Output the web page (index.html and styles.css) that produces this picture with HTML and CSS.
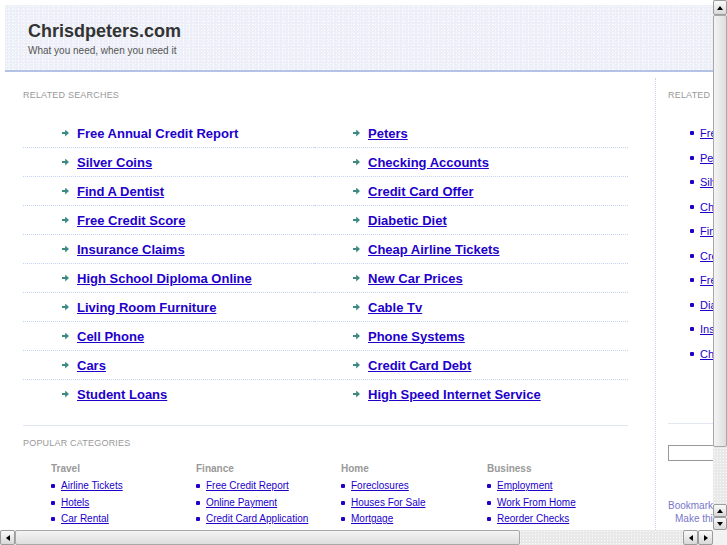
FILE: index.html
```html
<!DOCTYPE html>
<html lang="en">
  <head>
    <meta charset="UTF-8" />
    <title>Chrisdpeters.com</title>
    <link rel="stylesheet" href="styles.css">
  </head>
  <body>
    <div class="page">
      <div class="header">
        <h1>Chrisdpeters.com</h1>
        <p>What you need, when you need it</p>
      </div>

      <div class="content">
        <div class="main">
          <h2 class="label">Related Searches</h2>

          <div class="searches">
            <div class="item"><span class="arrow"></span><a href="#" class="plain">Free Annual Credit Report</a></div>
            <div class="item"><span class="arrow"></span><a href="#">Peters</a></div>
            <div class="item"><span class="arrow"></span><a href="#">Silver Coins</a></div>
            <div class="item"><span class="arrow"></span><a href="#">Checking Accounts</a></div>
            <div class="item"><span class="arrow"></span><a href="#">Find A Dentist</a></div>
            <div class="item"><span class="arrow"></span><a href="#">Credit Card Offer</a></div>
            <div class="item"><span class="arrow"></span><a href="#">Free Credit Score</a></div>
            <div class="item"><span class="arrow"></span><a href="#">Diabetic Diet</a></div>
            <div class="item"><span class="arrow"></span><a href="#">Insurance Claims</a></div>
            <div class="item"><span class="arrow"></span><a href="#">Cheap Airline Tickets</a></div>
            <div class="item"><span class="arrow"></span><a href="#">High School Diploma Online</a></div>
            <div class="item"><span class="arrow"></span><a href="#">New Car Prices</a></div>
            <div class="item"><span class="arrow"></span><a href="#">Living Room Furniture</a></div>
            <div class="item"><span class="arrow"></span><a href="#">Cable Tv</a></div>
            <div class="item"><span class="arrow"></span><a href="#">Cell Phone</a></div>
            <div class="item"><span class="arrow"></span><a href="#">Phone Systems</a></div>
            <div class="item"><span class="arrow"></span><a href="#">Cars</a></div>
            <div class="item"><span class="arrow"></span><a href="#">Credit Card Debt</a></div>
            <div class="item last"><span class="arrow"></span><a href="#">Student Loans</a></div>
            <div class="item last"><span class="arrow"></span><a href="#">High Speed Internet Service</a></div>
          </div>

          <div class="popular">
            <h2 class="label">Popular Categories</h2>
            <div class="cats">
              <div class="cat">
                <h3>Travel</h3>
                <ul>
                  <li><a href="#">Airline Tickets</a></li>
                  <li><a href="#">Hotels</a></li>
                  <li><a href="#">Car Rental</a></li>
                </ul>
              </div>
              <div class="cat">
                <h3>Finance</h3>
                <ul>
                  <li><a href="#">Free Credit Report</a></li>
                  <li><a href="#">Online Payment</a></li>
                  <li><a href="#">Credit Card Application</a></li>
                </ul>
              </div>
              <div class="cat">
                <h3>Home</h3>
                <ul>
                  <li><a href="#">Foreclosures</a></li>
                  <li><a href="#">Houses For Sale</a></li>
                  <li><a href="#">Mortgage</a></li>
                </ul>
              </div>
              <div class="cat">
                <h3>Business</h3>
                <ul>
                  <li><a href="#">Employment</a></li>
                  <li><a href="#">Work From Home</a></li>
                  <li><a href="#">Reorder Checks</a></li>
                </ul>
              </div>
            </div>
          </div>
        </div>

        <div class="side">
          <h2 class="label">Related Searches</h2>
          <ul class="side-links">
            <li><a href="#">Free Annual Credit Report</a></li>
            <li><a href="#">Peters</a></li>
            <li><a href="#">Silver Coins</a></li>
            <li><a href="#">Checking Accounts</a></li>
            <li><a href="#">Find A Dentist</a></li>
            <li><a href="#">Credit Card Offer</a></li>
            <li><a href="#">Free Credit Score</a></li>
            <li><a href="#">Diabetic Diet</a></li>
            <li><a href="#">Insurance Claims</a></li>
            <li><a href="#">Cheap Airline Tickets</a></li>
          </ul>
          <div class="search-box">
            <input type="text" />
          </div>
          <div class="bookmark">
            <a href="#">Bookmark this page</a>
            <a href="#">Make this your homepage</a>
          </div>
        </div>
      </div>
    </div>

    <!-- window scrollbars -->
    <div class="vscroll">
      <span class="sbtn up"></span>
      <span class="thumb"></span>
      <span class="track"></span>
      <span class="sbtn up"></span>
      <span class="sbtn down"></span>
    </div>
    <div class="hscroll">
      <span class="sbtn left"></span>
      <span class="thumb"></span>
      <span class="track"></span>
      <span class="sbtn left"></span>
      <span class="sbtn right"></span>
    </div>
    <div class="corner"></div>
  </body>
</html>
```

FILE: styles.css
```css
html {
  overflow: hidden;
}
body {
  margin: 0;
  font-family: "Liberation Sans", Arial, sans-serif;
  color: #333;
  background-color: #fff;
}
.page {
  width: 900px;
  padding: 5px 0 0 5px;
}
.header {
  height: 67px;
  padding: 14px 0 0 23px;
  box-sizing: border-box;
  background-color: #eceff7;
  background-image:
    radial-gradient(rgba(255, 255, 255, 0.9) 0.6px, transparent 0.8px),
    radial-gradient(rgba(255, 255, 255, 0.7) 0.6px, transparent 0.8px);
  background-size: 3px 3px, 5px 4px;
  background-position: 0 0, 1px 2px;
  border-bottom: 2px solid #b3c3e6;
}
.header h1 {
  margin: 0;
  font-size: 18px;
  line-height: 24px;
  font-weight: bold;
  color: #333;
}
.header p {
  margin: 1px 0 0;
  font-size: 10px;
  line-height: 14px;
  color: #555;
}
.content {
  display: flex;
  min-height: 520px;
}
.label {
  margin: 0;
  font-size: 9px;
  line-height: 12px;
  font-weight: normal;
  text-transform: uppercase;
  letter-spacing: 0.2px;
  color: #999;
}
.main {
  flex: none;
  width: 605px;
  margin: 0 27px 0 18px;
  padding-top: 17px;
}
.searches {
  display: grid;
  grid-template-columns: 291px 314px;
  margin-top: 18px;
}
.item {
  display: flex;
  align-items: center;
  height: 28px;
  padding-left: 39px;
  border-bottom: 1px dotted #c4d4f4;
}
.item.last {
  border-bottom: none;
}
.arrow {
  width: 7px;
  height: 7px;
  margin-right: 8px;
  background: #3d8a84;
  clip-path: polygon(0 35%, 45% 35%, 45% 0, 100% 50%, 45% 100%, 45% 65%, 0 65%);
}
.item a {
  font-size: 13px;
  font-weight: bold;
  color: #2200cc;
}
.item a.plain {
  text-decoration: none;
}
.popular {
  margin-top: 17px;
  padding-top: 11px;
  border-top: 1px solid #e3e6f3;
}
.cats {
  display: flex;
  margin-top: 13px;
  padding-left: 28px;
}
.cat {
  flex: none;
  width: 145px;
}
.cat:nth-child(3) {
  width: 146px;
}
.cat h3 {
  margin: 0 0 2px;
  font-size: 10px;
  line-height: 14px;
  color: #999;
}
.cat ul,
.side-links {
  list-style: none;
  margin: 0;
  padding: 0;
}
.cat li,
.side-links li {
  display: flex;
  align-items: center;
  font-size: 10px;
  line-height: 16.5px;
}
.cat li::before,
.side-links li::before {
  content: "";
  width: 4px;
  height: 4px;
  margin-right: 6px;
  border-radius: 1px;
  background: #2200cc;
}
.cat a,
.side-links a {
  color: #2200cc;
  white-space: nowrap;
}
.side {
  flex: none;
  width: 200px;
  padding: 17px 0 0 12px;
  border-left: 1px dotted #c9d3ef;
  margin-top: 6px;
}
.side .label {
  margin-top: -6px;
}
.side-links {
  margin-top: 20px;
  padding-left: 22px;
}
.side-links li {
  font-size: 11px;
  line-height: 24.5px;
}
.search-box {
  margin-top: 57px;
  padding-top: 19px;
  border-top: 1px solid #e3e6f3;
}
.search-box input {
  width: 150px;
  height: 16px;
  box-sizing: border-box;
  border: 1px solid #999;
  padding: 0;
}
.bookmark {
  display: flex;
  flex-direction: column;
  align-items: flex-start;
  margin-top: 38px;
  font-size: 10px;
  line-height: 13px;
}
.bookmark a {
  color: #7777cc;
  text-decoration: none;
}
.bookmark a + a {
  margin-left: 7px;
}

/* scrollbars */
.vscroll,
.hscroll {
  position: fixed;
  display: flex;
  background-color: #e9e9e9;
  background-image: radial-gradient(rgba(255, 255, 255, 0.8) 0.6px, transparent 0.8px);
  background-size: 3px 3px;
}
.vscroll {
  top: 0;
  right: 0;
  width: 14px;
  height: 530px;
  flex-direction: column;
}
.hscroll {
  left: 0;
  bottom: 0;
  width: 713px;
  height: 15px;
}
.corner {
  position: fixed;
  right: 0;
  bottom: 0;
  width: 14px;
  height: 15px;
  background: #f2f2f2;
}
.sbtn {
  position: relative;
  flex: none;
  box-sizing: border-box;
  border: 1px solid #9c9c9c;
  border-radius: 2px;
  background: linear-gradient(#fafafa, #d9d9d9);
}
.vscroll .sbtn {
  width: 14px;
  height: 13px;
}
.vscroll .sbtn:first-child {
  height: 15px;
}
.hscroll .sbtn {
  width: 15px;
  height: 15px;
}
.sbtn::after {
  content: "";
  position: absolute;
  left: 50%;
  top: 50%;
  width: 0;
  height: 0;
  border: 3px solid transparent;
}
.sbtn.up::after {
  border-bottom: 4px solid #000;
  border-top-width: 0;
  margin: -2px 0 0 -3px;
}
.sbtn.down::after {
  border-top: 4px solid #000;
  border-bottom-width: 0;
  margin: -2px 0 0 -3px;
}
.sbtn.left::after {
  border-right: 4px solid #000;
  border-left-width: 0;
  margin: -3px 0 0 -2px;
}
.sbtn.right::after {
  border-left: 4px solid #000;
  border-right-width: 0;
  margin: -3px 0 0 -2px;
}
.thumb {
  flex: none;
  box-sizing: border-box;
  border: 1px solid #a8a8a8;
  border-radius: 2px;
  background: linear-gradient(90deg, #f4f4f4, #dedede);
}
.vscroll .thumb {
  height: 432px;
}
.hscroll .thumb {
  width: 505px;
  background: linear-gradient(#f4f4f4, #dedede);
}
.track {
  flex: 1;
}
```
